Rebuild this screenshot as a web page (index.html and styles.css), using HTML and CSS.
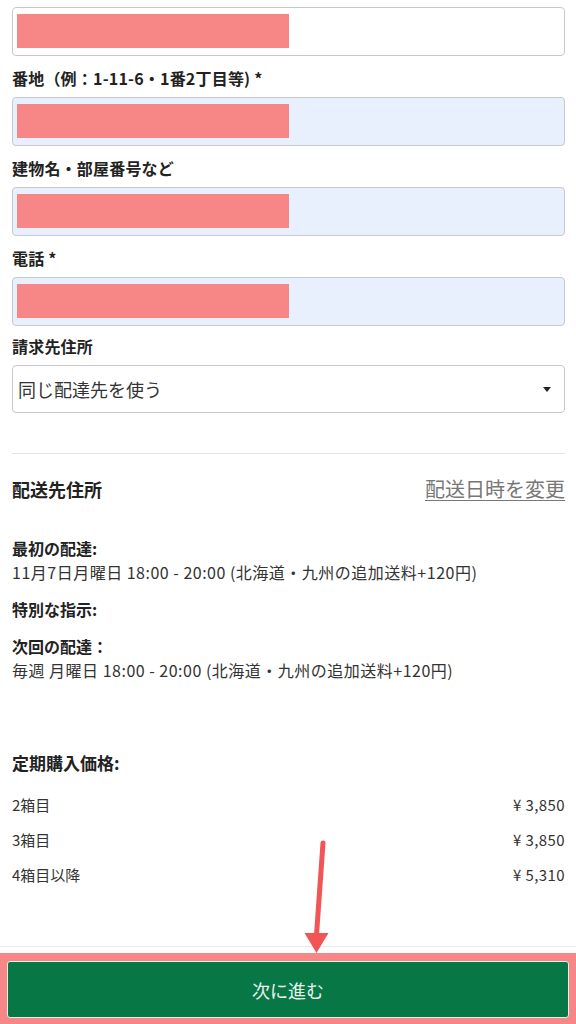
FILE: index.html
```html
<!DOCTYPE html>
<html lang="ja">
<head>
<meta charset="utf-8">
<title>チェックアウト</title>
<link rel="stylesheet" href="styles.css">
</head>
<body>
<div class="page">
  <div class="form">
    <div class="input input-first"><span class="redact"></span></div>
    <div class="field">
      <label class="label">番地（例：1-11-6・1番2丁目等) *</label>
      <div class="input input-filled"><span class="redact"></span></div>
    </div>
    <div class="field">
      <label class="label">建物名・部屋番号など</label>
      <div class="input input-filled"><span class="redact"></span></div>
    </div>
    <div class="field">
      <label class="label">電話 *</label>
      <div class="input input-filled"><span class="redact"></span></div>
    </div>
    <div class="field field-tight">
      <label class="label">請求先住所</label>
      <div class="select"><span>同じ配達先を使う</span><span class="caret"></span></div>
    </div>
  </div>

  <div class="divider"></div>

  <section class="shipping">
    <div class="ship-head">
      <h2 class="ship-title">配送先住所</h2>
      <a class="ship-link" href="#">配送日時を変更</a>
    </div>
    <div class="ship-block ship-block-first">
      <div class="ship-term">最初の配達:</div>
      <div class="ship-desc">11月7日月曜日 18:00 - 20:00 (北海道・九州の追加送料+120円)</div>
    </div>
    <div class="ship-block">
      <div class="ship-term">特別な指示:</div>
    </div>
    <div class="ship-block">
      <div class="ship-term">次回の配達：</div>
      <div class="ship-desc">毎週 月曜日 18:00 - 20:00 (北海道・九州の追加送料+120円)</div>
    </div>
  </section>

  <section class="prices">
    <h3 class="prices-title">定期購入価格:</h3>
    <div class="price-row"><span>2箱目</span><span>¥ 3,850</span></div>
    <div class="price-row"><span>3箱目</span><span>¥ 3,850</span></div>
    <div class="price-row"><span>4箱目以降</span><span>¥ 5,310</span></div>
  </section>

  <footer class="footer">
    <div class="highlight">
      <button class="next-btn" type="button">次に進む</button>
    </div>
  </footer>

  <svg class="arrow" width="40" height="125" viewBox="0 0 40 125">
    <line x1="28" y1="8" x2="21.5" y2="100" stroke="#f25555" stroke-width="5" stroke-linecap="round"/>
    <polygon points="9.5,98 33.5,98 21.5,118" fill="#f25555"/>
  </svg>
</div>
</body>
</html>
```

FILE: styles.css
```css
* {
  box-sizing: border-box;
}

html, body {
  margin: 0;
  padding: 0;
  background: #ffffff;
}

body {
  font-family: "Noto Sans CJK JP", "Noto Sans", sans-serif;
  color: #333333;
  font-size: 15px;
  width: 576px;
  height: 1024px;
  overflow: hidden;
}

.page {
  position: relative;
  height: 1024px;
  display: flex;
  flex-direction: column;
}

.form {
  padding: 0 11px 0 12px;
}

.input {
  height: 49px;
  border: 1px solid #c9c9c9;
  border-radius: 4px;
  background: #ffffff;
  padding: 6px 0 0 4px;
}

.input-first {
  margin-top: 7px;
}

.input-filled {
  background: #e8f0fe;
}

.redact {
  display: block;
  width: 272px;
  height: 34px;
  background: #f78686;
}

.field {
  margin-top: 12px;
}

.field-tight {
  margin-top: 10px;
}

.label {
  display: block;
  font-size: 16px;
  font-weight: 700;
  line-height: 20px;
  color: #222222;
  margin-bottom: 9px;
  letter-spacing: 0.2px;
}

.select {
  height: 48px;
  border: 1px solid #c9c9c9;
  border-radius: 4px;
  background: #ffffff;
  display: flex;
  align-items: center;
  justify-content: space-between;
  padding: 0 13px 0 5px;
  font-size: 18px;
  color: #333333;
}

.caret {
  width: 0;
  height: 0;
  border-left: 4.5px solid transparent;
  border-right: 4.5px solid transparent;
  border-top: 5px solid #222222;
}

.divider {
  margin: 40px 11px 0 12px;
  height: 1px;
  background: #e4e4e4;
}

.shipping {
  padding: 0 11px 0 12px;
}

.ship-head {
  margin-top: 23px;
  display: flex;
  justify-content: space-between;
  align-items: center;
  height: 24px;
}

.ship-title {
  margin: 0;
  font-size: 18px;
  font-weight: 700;
  color: #222222;
  line-height: 24px;
}

.ship-link {
  font-size: 20px;
  color: #777777;
  text-decoration: underline;
  text-decoration-thickness: 1px;
  text-underline-offset: 3px;
  line-height: 24px;
}

.ship-block {
  margin-top: 13px;
}

.ship-block-first {
  margin-top: 35px;
}

.ship-term {
  font-size: 16px;
  font-weight: 700;
  line-height: 24px;
  color: #222222;
}

.ship-desc {
  font-size: 16px;
  line-height: 24px;
  color: #333333;
  letter-spacing: 0.5px;
}

.prices {
  padding: 0 11px 0 12px;
  margin-top: 69px;
}

.prices-title {
  margin: 0 0 12px;
  font-size: 17px;
  font-weight: 700;
  line-height: 24px;
  color: #222222;
}

.price-row {
  display: flex;
  justify-content: space-between;
  align-items: center;
  height: 35px;
  font-size: 15px;
  color: #333333;
}

.price-row span:last-child {
  letter-spacing: 0.4px;
}

.footer {
  margin-top: auto;
  border-top: 1px solid #e8ebec;
  padding-top: 6px;
}

.highlight {
  background: #f78686;
  padding: 8px 7px 6px 7px;
}

.next-btn {
  display: block;
  width: 100%;
  height: 57px;
  border: 1px solid #e6f0ea;
  border-radius: 3px;
  background: #077746;
  color: #e8f4ee;
  font-family: "Noto Sans CJK JP", "Noto Sans", sans-serif;
  font-size: 18px;
  cursor: pointer;
}

.arrow {
  position: absolute;
  left: 295px;
  top: 835px;
}
```
